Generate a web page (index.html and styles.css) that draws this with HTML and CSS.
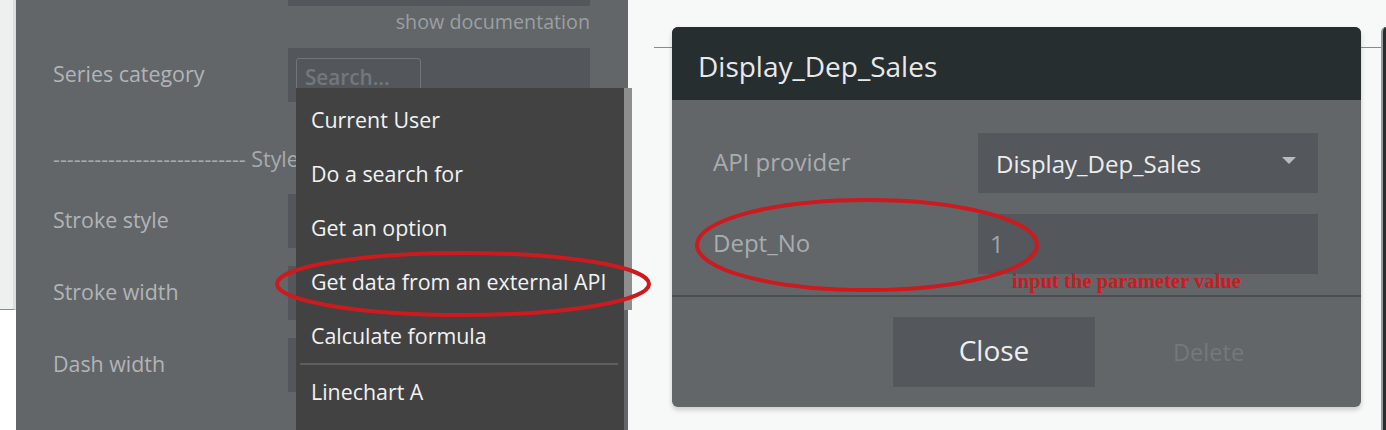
FILE: index.html
```html
<!DOCTYPE html>
<html>
<head>
<meta charset="utf-8">
<link rel="stylesheet" href="styles.css">
</head>
<body>
<div class="page">
  <div class="edge-left"><div class="edge-left-top"></div></div>

  <div class="panel">
    <div class="field-box top-box"></div>
    <div class="doc-row"><span class="doc-link">show documentation</span></div>

    <div class="prop-row">
      <div class="prop-label">Series category</div>
      <div class="field-box">
        <div class="search-input">Search...</div>
      </div>
    </div>

    <div class="section-row">---------------------------- Style</div>

    <div class="prop-row">
      <div class="prop-label">Stroke style</div>
      <div class="field-box"></div>
    </div>
    <div class="prop-row spaced">
      <div class="prop-label">Stroke width</div>
      <div class="field-box"></div>
    </div>
    <div class="prop-row spaced">
      <div class="prop-label">Dash width</div>
      <div class="field-box"></div>
    </div>

    <div class="dropdown">
      <ul class="menu">
        <li class="menu-item">Current User</li>
        <li class="menu-item">Do a search for</li>
        <li class="menu-item">Get an option</li>
        <li class="menu-item">Get data from an external API</li>
        <li class="menu-item">Calculate formula</li>
        <li class="menu-sep"></li>
        <li class="menu-item">Linechart A</li>
      </ul>
      <div class="scrollbar"><div class="thumb"></div></div>
    </div>
  </div>

  <div class="gap-area"><div class="hline"></div></div>

  <div class="modal-area">
    <div class="modal">
      <div class="modal-header">Display_Dep_Sales</div>
      <div class="modal-body">
        <div class="modal-row">
          <div class="modal-label">API provider</div>
          <div class="modal-field select">
            <span>Display_Dep_Sales</span>
            <svg class="caret" width="14" height="7" viewBox="0 0 14 7"><path d="M0 0 H14 L7 7 Z" fill="#b9bcbf"/></svg>
          </div>
        </div>
        <div class="modal-row">
          <div class="modal-label">Dept_No</div>
          <div class="modal-field input">1</div>
        </div>
      </div>
      <div class="modal-divider"></div>
      <div class="modal-footer">
        <div class="btn-close">Close</div>
        <div class="btn-delete">Delete</div>
      </div>
      <div class="note">input the parameter value</div>
    </div>
  </div>

  <div class="right-edge">
    <div class="hline short"></div>
    <div class="next-modal"></div>
  </div>

  <svg class="annotations" width="1386" height="430" viewBox="0 0 1386 430">
    <ellipse cx="463" cy="284" rx="186" ry="31" fill="none" stroke="#cc1a1f" stroke-width="4"/>
    <ellipse cx="867" cy="245" rx="170" ry="45" fill="none" stroke="#cc1a1f" stroke-width="4"/>
  </svg>
</div>
</body>
</html>
```

FILE: styles.css
```css
* { box-sizing: border-box; margin: 0; padding: 0; }

html, body {
  width: 1386px;
  height: 430px;
  overflow: hidden;
}

body {
  background: #f7f8f8;
  font-family: "Open Sans", "Noto Sans", sans-serif;
}

.page {
  position: relative;
  display: flex;
  width: 1386px;
  height: 430px;
}

/* left edge strip */
.edge-left {
  width: 16px;
  flex: none;
  background: #ffffff;
}
.edge-left-top {
  height: 310px;
  background: #eef0f0;
  border-right: 3px solid #dcdede;
  border-bottom: 1px solid #8c8c8c;
}

/* properties panel */
.panel {
  position: relative;
  width: 612px;
  flex: none;
  background: #626669;
  display: flex;
  flex-direction: column;
}

.field-box {
  width: 302px;
  height: 54px;
  margin-left: auto;
  margin-right: 38px;
  background: #53575b;
  flex: none;
}
.top-box { height: 6px; }

.doc-row {
  height: 42px;
  display: flex;
  justify-content: flex-end;
  padding-right: 38px;
}
.doc-link {
  font-size: 19.7px;
  line-height: 32px;
  color: #9b9fa2;
}

.prop-row {
  display: flex;
  align-items: center;
  height: 54px;
}
.prop-row.spaced { margin-top: 18px; }

.prop-label {
  padding-left: 37px;
  padding-bottom: 4px;
  font-size: 21.4px;
  color: #b1b4b7;
}

.prop-row .field-box { padding: 10px 0 0 8px; }

.search-input {
  width: 125px;
  height: 40px;
  border: 1px solid #72767a;
  border-radius: 3px;
  padding-left: 8px;
  font-size: 20.7px;
  font-weight: 600;
  line-height: 36px;
  color: #74787c;
  white-space: nowrap;
}

.section-row {
  height: 92px;
  padding-top: 43px;
  padding-left: 37px;
  font-size: 21.4px;
  line-height: 28px;
  color: #a8abae;
  white-space: nowrap;
  overflow: hidden;
}

/* dropdown overlay */
.dropdown {
  position: absolute;
  left: 280px;
  top: 88px;
  width: 336px;
  height: 342px;
  display: flex;
  z-index: 5;
}
.menu {
  list-style: none;
  width: 328px;
  background: #424242;
  padding-top: 5px;
}
.menu-item {
  height: 54px;
  padding-left: 15px;
  font-size: 21.4px;
  line-height: 54px;
  color: #f2f2f2;
  white-space: nowrap;
}
.menu-sep {
  height: 2px;
  margin: 0 6px 0 4px;
  background: #5e5e5e;
}
.scrollbar {
  width: 8px;
}
.thumb {
  height: 222px;
  background: #8e8e8e;
}

/* gap between panel and modal */
.gap-area {
  width: 44px;
  flex: none;
  padding-top: 47px;
}
.hline {
  height: 1px;
  margin-left: 26px;
  background: #8a8a8a;
}

/* modal */
.modal-area {
  width: 689px;
  flex: none;
  padding-top: 27px;
}
.modal {
  position: relative;
  width: 689px;
  height: 380px;
  background: #626669;
  border-radius: 6px;
  overflow: hidden;
  box-shadow: 0 3px 5px rgba(0, 0, 0, 0.18);
  display: flex;
  flex-direction: column;
}
.modal-header {
  height: 73px;
  flex: none;
  background: #272e30;
  padding: 5px 0 0 26px;
  display: flex;
  align-items: center;
  font-size: 28px;
  color: #e8eaea;
}
.modal-body {
  padding: 33px 43px 0 41px;
  display: flex;
  flex-direction: column;
  gap: 21px;
}
.modal-row {
  display: flex;
  align-items: center;
  height: 60px;
}
.modal-label {
  flex: 1;
  padding-bottom: 4px;
  font-size: 24px;
  color: #a9acaf;
}
.modal-field {
  width: 340px;
  height: 60px;
  background: #54575b;
  display: flex;
  align-items: center;
  font-size: 24px;
}
.modal-field.select {
  padding: 0 22px 0 18px;
  justify-content: space-between;
  color: #ebecec;
}
.modal-field.input {
  padding-left: 12px;
  padding-bottom: 2px;
  color: #a2a5a8;
}
.caret { margin-top: -6px; }

.modal-divider {
  margin-top: 21px;
  height: 2px;
  background: #4c4f52;
  flex: none;
}
.modal-footer {
  flex: 1;
  display: flex;
  align-items: center;
  padding-left: 221px;
}
.btn-close {
  width: 202px;
  height: 70px;
  padding-bottom: 5px;
  background: #54575b;
  display: flex;
  align-items: center;
  justify-content: center;
  font-size: 28px;
  color: #eeeeee;
}
.btn-delete {
  margin-left: 78px;
  font-size: 23.6px;
  color: #74787c;
}

.note {
  position: absolute;
  left: 340px;
  top: 243px;
  font-family: "Liberation Serif", "Times New Roman", serif;
  font-weight: bold;
  font-size: 20.6px;
  color: #cc1a1f;
  white-space: nowrap;
}

/* right edge */
.right-edge {
  flex: 1;
  position: relative;
  padding-top: 47px;
}
.right-edge .hline.short {
  margin: 0 5px 0 0;
}
.next-modal {
  position: absolute;
  right: 0;
  top: 27px;
  width: 5px;
  height: 403px;
  background: #272e30;
  border-top-left-radius: 5px;
  border-left: 2px solid #9a9a9a;
}

/* annotation overlay */
.annotations {
  position: absolute;
  left: 0;
  top: 0;
  pointer-events: none;
  z-index: 10;
}
```
